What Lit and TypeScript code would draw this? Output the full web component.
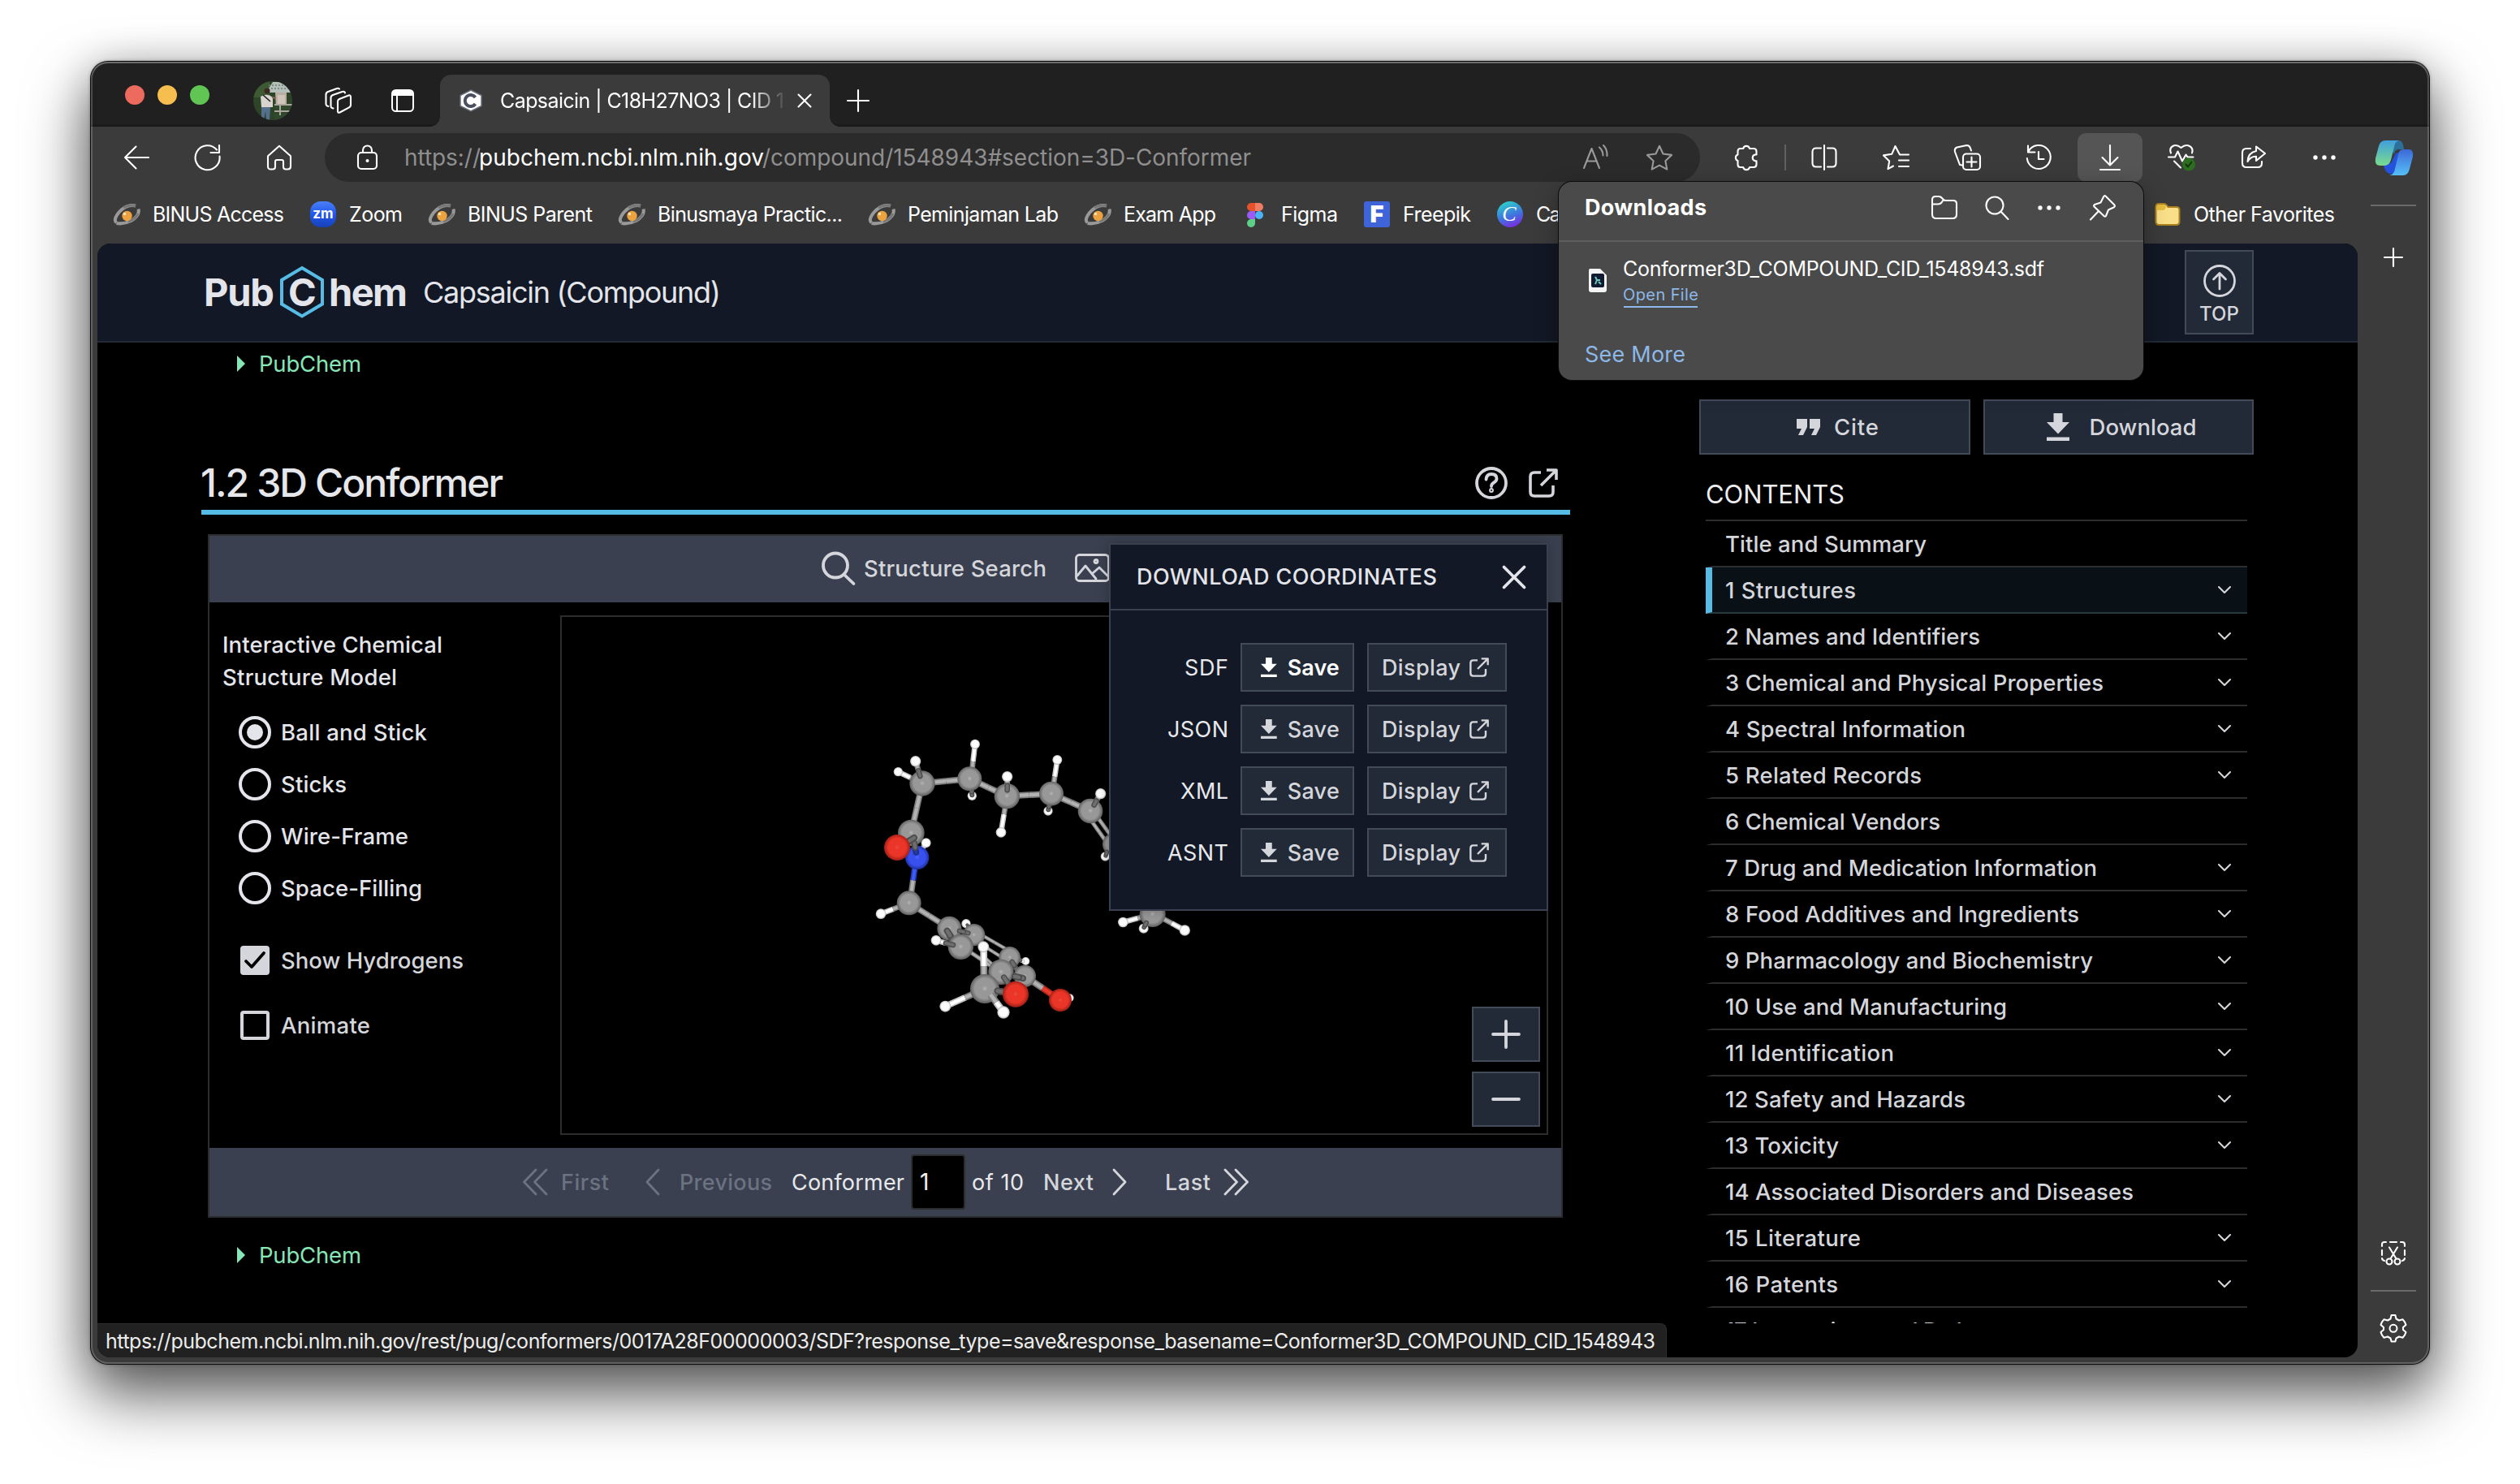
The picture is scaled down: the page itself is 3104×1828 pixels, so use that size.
import { LitElement, html, css, svg, nothing } from "lit";
import { customElement, property } from "lit/decorators.js";

/* Text set to a given measured width by spreading the difference over its letters. */
@customElement("fit-text")
class FitText extends LitElement {
  @property({ type: Number }) w = 0;
  @property() text = "";
  static styles = css`
    :host { display: inline-block; white-space: pre; flex: none; }
    .t { display: inline-block; margin-left: -1px; margin-right: -20px; }
  `;
  updated() {
    const el = this.renderRoot.querySelector(".t") as HTMLElement;
    el.style.letterSpacing = "0px";
    const natural = el.getBoundingClientRect().width;
    const n = Math.max(1, this.text.length - 1);
    if (this.w) {
      this.style.width = `${this.w}px`;
      el.style.letterSpacing = `${(this.w + 2 - natural) / n}px`;
    }
  }
  render() {
    return html`<span class="t">${this.text}</span>`;
  }
}

const fit = (text: string, w: number, cls = "") => html`<fit-text class=${cls} .w=${w} .text=${text}></fit-text>`;

/* Icons are drawn on a canvas of w x h pixels. */
const icon = (w: number, h: number, body: unknown, cls = "line") =>
  html`<svg class=${cls} width=${w} height=${h} viewBox="0 0 ${w} ${h}">${body}</svg>`;

const I = {
  back: () => icon(32, 32, svg`<path d="M31 16H2M15.500 2.500 2 16l13.500 13.500"/>`),
  reload: () => icon(32, 32, svg`<path d="M30.500 14.500A15 15 0 1 1 27 6.500M30 1v9h-10.500"/>`),
  home: () => icon(32, 32, svg`<path d="M2 14.200 16 1.800l14 12.400V27q0 3.500-3.500 3.500H24q-3 0-3-3V21q0-2-2-2h-6q-2 0-2 2v6.500q0 3-3 3H5.500Q2 30.500 2 27z"/>`),
  lock: () => icon(32, 32, svg`<rect x="5" y="10" width="23" height="20" rx="4"/><path d="M11 10V7a5.500 5.500 0 0 1 11 0v3"/><circle cx="16.500" cy="20" r="2" fill="currentColor" stroke="none"/>`),
  aloud: () => icon(32, 32, svg`<path d="M2 29 11.500 5 21 29M5.500 20.500h12M21 3.500q4.500 4 4.500 10M26 1q5 5 4.500 13"/>`),
  star: () => icon(34, 32, svg`<path d="m17 1.800 4.500 9.700 10.500 1.400-7.600 7.300 1.900 10.400-9.300-5-9.300 5 1.900-10.400L2 12.900l10.500-1.400z"/>`),
  puzzle: () => icon(32, 32, svg`<path d="M7.500 5h4.700a4 4 0 0 1 7.800 0h5q3.500 0 3.500 3.500v4h-1.500a3.900 3.900 0 0 0 0 7.700h1.500v4.300q0 3.500-3.500 3.500h-5a4 4 0 0 1-7.800 0H8.500q-3 0-3-3.500V20a4 4 0 0 1 0-7.500V8.500Q5.500 5 8.500 5z"/>`),
  split: () => icon(32, 32, svg`<path d="M12 4.500H6q-4.500 0-4.500 4.500v14q0 4.500 4.500 4.500h6M20 4.500h6q4.500 0 4.500 4.500v14q0 4.500-4.500 4.500h-6M16 1v30"/>`),
  favs: () => icon(34, 32, svg`<path d="M22 12.500 16.500 2l-4.300 9.800L2 13.400l7.200 7-1.700 9.800 6.500-3.700M22 12.500h11M21 19.500h12M21 27h12"/>`),
  collections: () => icon(34, 32, svg`<rect x="12" y="11.500" width="21" height="19.500" rx="4"/><path d="M22.500 15.500v12M16.500 21.500h12M11 25.500 8 25 2 9q-1-4 2.500-5.500l12-2.500q3.500 0 4.500 3.500l1 3"/>`),
  history: () => icon(32, 32, svg`<path d="M3.500 8.500A14.500 14.500 0 1 1 1.800 17M3 1.500v8h8.500M16 9v9h6.500"/>`),
  dl: () => icon(34, 32, svg`<path d="M17 1v24M7.500 16 17 25.500l9.500-9.500M5 31h24"/>`),
  heart: () => icon(34, 36, svg`<path d="M4 12.500C1 5 9-.500 16.500 6 24-.500 32.500 5 30 12.500M1 17.500h8l3.500-7 5.500 12 4.500-8 2 3h7M8 22.500l8 8"/><circle cx="26" cy="26.500" r="8" fill="#2b6e1f" stroke="none"/><path d="m22.500 26.500 2.500 3 4.500-6" stroke="#16300f" stroke-width="2"/>`),
  share: () => icon(34, 32, svg`<path d="M14 5H9Q4 5 4 10v13q0 5 5 5h14q5 0 5-5v-2"/><path d="M21 2.500 32 11 21 20v-5.200Q14 14.500 10.500 21 11 10 21 8z"/>`),
  dots: () => icon(32, 8, svg`<circle cx="5" cy="4" r="2.700"/><circle cx="16" cy="4" r="2.700"/><circle cx="27" cy="4" r="2.700"/>`, "solid"),
  plus: (s: number) => icon(s, s, svg`<path d="M${s / 2} 1v${s - 2}M1 ${s / 2}h${s - 2}"/>`),
  cross: (s: number, c = "line") => icon(s, s, svg`<path d="m1.500 1.500 ${s - 3} ${s - 3}m0-${s - 3}-${s - 3} ${s - 3}"/>`, c),
  folder: () => icon(34, 32, svg`<path d="M2 9V6q0-4 4-4h4q2.500 0 4 2l2 2q1 1 3 1h9q4 0 4 4v13q0 5-5 5H7q-5 0-5-5zM2 11.500h7q3 0 4.500-2l2-3"/>`),
  mag: () => icon(30, 32, svg`<circle cx="12" cy="13" r="10.500"/><path d="m19.500 20.500 9 9.500"/>`),
  pin: () => icon(34, 34, svg`<path d="M20.500 2.500 31.500 13.500q1 2-1 3l-6.500 3-3 7.500q-1 1.500-2.500 0L6.500 15.500q-1-1.500.5-2.500l7.500-2.500 3.500-7q1-2 2.500-1zM11.500 21.500 2 31.500"/>`),
  ext: (s: number) => icon(s, s, svg`<g transform="scale(${s / 36})"><path d="M15 5H7Q2 5 2 10v19q0 5 5 5h18q5 0 5-5V21M22 2h12v12M34 2 15 21"/></g>`, "line ext"),
  dlSolid: (s: number) => icon((s * 28) / 34, s, svg`<g transform="scale(${s / 34})"><path d="M8.500 0h11v11h8.500L14 25.500 0 11h8.500zM0 29.500h28V34H0z"/></g>`, "solid"),
  glass: () => icon(42, 42, svg`<circle cx="17" cy="17.500" r="15"/><path d="M28 29 39.500 40"/>`, "line heavy"),
  image: () => icon(46, 36, svg`<rect x="1.500" y="1.500" width="40" height="32" rx="4"/><path d="m3 27 10-12 13 16M22 24l8-7 11 11"/><circle cx="26" cy="9.500" r="2"/>`, "line mid"),
  snip: () => icon(32, 32, svg`<path d="M2 7V5q0-3 3-3h2M12 2h8M25 2h2q3 0 3 3v2M2 12v6M30 12v6M2 22q.5 2.500 3 3M30 22q-.5 2.500-3 3M11 8.500l8.500 14M21 8.500l-8.500 14"/><circle cx="11" cy="26" r="3.500"/><circle cx="21" cy="26" r="3.500"/>`),
  gear: () => icon(34, 36, svg`<path d="M13.500 6.500 14.600 2h4.800l1.100 4.500 3.500 2 4.500-1.300q3 3 4 6.800L29 17v3l3.500 3q-1 3.800-4 6.800L24 28.500l-3.500 2-1.100 4h-4.800l-1.100-4-3.500-2-4.500 1.300q-3-3-4-6.800L5 20v-3l-3.500-3q1-3.800 4-6.800L10 8.500z"/><circle cx="17" cy="18.300" r="4.500"/>`),
};

const binus = () => icon(32, 32, svg`<path d="M27 5.500Q16 3 6.500 13.500-1 23 3.500 26M30.500 9.500q2 8-9 14.500-9 4.500-18 3" stroke="#999" stroke-width="4" fill="none"/><path d="M27 5.500Q18 3.500 12 8M30 15q-3 7-12 10" stroke="#777" stroke-width="3" fill="none"/><circle cx="16.500" cy="18" r="6.200" fill="#eba23f"/><rect x="12" y="14" width="3" height="3" fill="#ffe2b8"/>`, "pic");
const zoomIcon = () => html`<span class="zm"><b>zm</b></span>`;
const figma = () => icon(32, 32, svg`<path d="M16 2h-5a5 5 0 0 0 0 10h5z" fill="#e5532d"/><path d="M16 2h5a5 5 0 0 1 0 10h-5z" fill="#ef7b62"/><path d="M16 12h-5a5 5 0 0 0 0 10h5z" fill="#9a5cf5"/><circle cx="21" cy="17" r="5" fill="#4bb3f5"/><path d="M16 22h-5a5 5 0 1 0 5 5z" fill="#5fce88"/>`, "pic");
const freepik = () => html`<span class="fp"><b>F</b></span>`;
const canva = () => html`<span class="cv"><i>C</i></span>`;

const bookmarks: [() => unknown, string, number][] = [
  [binus, "BINUS Access", 160], [zoomIcon, "Zoom", 64], [binus, "BINUS Parent", 152],
  [binus, "Binusmaya Practic...", 226], [binus, "Peminjaman Lab", 184], [binus, "Exam App", 112],
  [figma, "Figma", 68], [freepik, "Freepik", 82], [canva, "Canva", 66],
];

const toc: [string, number, boolean][] = [
  ["Title and Summary", 246, false], ["1 Structures", 159, true], ["2 Names and Identifiers", 312, true],
  ["3 Chemical and Physical Properties", 464, true], ["4 Spectral Information", 294, true],
  ["5 Related Records", 240, true], ["6 Chemical Vendors", 263, false],
  ["7 Drug and Medication Information", 456, true], ["8 Food Additives and Ingredients", 434, true],
  ["9 Pharmacology and Biochemistry", 451, true], ["10 Use and Manufacturing", 345, true],
  ["11 Identification", 206, true], ["12 Safety and Hazards", 294, true], ["13 Toxicity", 138, true],
  ["14 Associated Disorders and Diseases", 501, false], ["15 Literature", 165, true],
  ["16 Patents", 137, true], ["17 Interactions and Pathways", 366, true],
];

/* ---- molecule ---- */
type Shape = ["a", string, number, number, number] | ["b", string, string, number, number, number, number, number];
const A = (k: string, x: number, y: number, r: number): Shape => ["a", k, x, y, r];
const B = (k1: string, k2: string, x1: number, y1: number, x2: number, y2: number, w = 20): Shape => ["b", k1, k2, x1, y1, x2, y2, w];
const tone: Record<string, [string, string]> = {
  C: ["#7c7c7c", "#b2b2b2"], D: ["#4d4d4d", "#6e6e6e"], H: ["#c4c4c4", "#ffffff"],
  O: ["#b3261c", "#ea3a2b"], R: ["#7c1a13", "#a5261d"], N: ["#2438b8", "#3f5bf5"], M: ["#1f2d80", "#29389c"],
};
const molecule: Shape[] = [
  B("C", "H", 258, 255, 169, 212), A("H", 169, 212, 17),
  B("C", "C", 258, 255, 433, 238, 23), B("C", "C", 433, 238, 571, 302, 23), B("C", "C", 571, 302, 735, 293, 23),
  B("C", "C", 735, 293, 879, 357, 23), B("C", "C", 258, 255, 217, 438, 23),
  B("C", "H", 438, 238, 453, 110), A("H", 453, 110, 18), B("C", "H", 571, 302, 549, 436), A("H", 549, 436, 19),
  B("C", "H", 738, 293, 757, 168), A("H", 757, 168, 18),
  A("H", 442, 301, 17), B("D", "D", 440, 275, 442, 298, 18), A("H", 723, 357, 17), B("D", "D", 728, 330, 724, 352, 18),
  B("C", "C", 895, 365, 985, 490, 15), B("C", "C", 870, 375, 955, 495, 15),
  A("C", 965, 480, 41), A("H", 934, 525, 17), B("D", "D", 940, 508, 936, 522, 16),
  A("C", 258, 255, 47), A("C", 433, 238, 45), A("C", 571, 302, 47), A("C", 735, 293, 45), A("C", 879, 357, 46),
  B("D", "C", 250, 228, 238, 188), A("H", 233, 173, 20), B("D", "C", 572, 280, 572, 245), A("H", 572, 230, 20),
  B("D", "C", 893, 335, 910, 304), A("H", 917, 293, 20),
  B("H", "C", 271, 476, 250, 510, 18), A("H", 272, 475, 18), A("C", 217, 438, 49),
  B("N", "C", 236, 529, 212, 697, 22), A("N", 239, 529, 44), B("D", "M", 229, 475, 235, 510, 22), B("D", "R", 228, 456, 190, 480, 24),
  A("O", 165, 492, 48),
  B("C", "H", 195, 702, 105, 737), A("H", 105, 737, 19), B("C", "C", 209, 697, 358, 791, 22), A("C", 209, 697, 45),
  B("C", "C", 460, 805, 590, 880, 13), B("C", "C", 460, 840, 580, 915, 13), B("C", "C", 400, 855, 550, 955, 15), B("C", "C", 480, 890, 530, 935, 12),
  A("H", 420, 773, 17), B("D", "D", 432, 787, 424, 778, 12), A("C", 358, 791, 45), A("C", 449, 815, 41),
  B("D", "D", 395, 800, 428, 808, 18), B("D", "D", 350, 800, 372, 835, 24), A("C", 400, 859, 47),
  B("D", "H", 372, 852, 318, 838), A("H", 309, 835, 19),
  A("H", 640, 912, 15), B("D", "H", 612, 906, 630, 912, 14), A("C", 581, 898, 40), B("D", "D", 590, 915, 605, 940, 20),
  B("C", "O", 637, 967, 768, 1056, 24), A("C", 637, 967, 41), A("C", 549, 952, 47), B("D", "D", 600, 968, 630, 975, 24),
  B("D", "R", 560, 972, 585, 1008, 22), B("C", "H", 486, 990, 485, 870, 26), A("H", 484, 859, 21),
  B("C", "H", 489, 1014, 343, 1079, 24), A("H", 343, 1079, 21),
  A("C", 489, 1014, 54), B("D", "R", 536, 1022, 578, 1028, 26), A("O", 603, 1034, 48),
  B("C", "H", 510, 1035, 552, 1092, 26), A("H", 558, 1101, 23), A("H", 803, 1048, 15), A("O", 768, 1056, 42),
  B("C", "H", 1109, 738, 1000, 768), A("H", 1000, 768, 19), B("C", "H", 1130, 745, 1228, 798), A("H", 1228, 798, 20),
  A("H", 1076, 791, 18), A("C", 1109, 738, 48), B("D", "D", 1086, 770, 1078, 786, 18),
];
const drawShape = (s: Shape) => {
  if (s[0] === "a") return svg`<circle cx=${s[2]} cy=${s[3]} r=${s[4]} fill="url(#g${s[1]})"/>`;
  const [, k1, k2, x1, y1, x2, y2, w] = s;
  const mx = (x1 + x2) / 2, my = (y1 + y2) / 2;
  const half = (k: string, a: number, b: number, c: number, d: number) => svg`
    <path d="M${a} ${b}L${c} ${d}" stroke=${tone[k][0]} stroke-width=${w} fill="none"/>
    <path d="M${a} ${b}L${c} ${d}" stroke=${tone[k][1]} stroke-width=${w * 0.55} fill="none"/>`;
  return svg`<g stroke-linecap=${k1 === "D" ? "round" : "butt"}>${half(k2, mx, my, x2, y2)}${half(k1, x1, y1, mx, my)}</g>`;
};
const grad = (id: string, a: string, b: string, c: string) => svg`
  <radialGradient id=${id} cx="50%" cy="49%" r="51%"><stop offset="0" stop-color=${a}/><stop offset=".2" stop-color=${b}/><stop offset=".68" stop-color=${b}/><stop offset="1" stop-color=${c}/></radialGradient>`;

const sourceLink = (s: string) => html`<span class="tri"></span>${fit(s, 124)}`;

@customElement("app-root")
class AppRoot extends LitElement {
  static styles = css`
    :host { display: block; width: 3104px; height: 1828px; box-sizing: border-box; padding: 76px 112px; background: #fff; overflow: hidden; font-family: Inter, "Liberation Sans", sans-serif; font-optical-sizing: none; font-size: 26px; color: #fff; }
    * { box-sizing: border-box; }
    svg { flex: none; display: block; overflow: visible; }
    .line { fill: none; stroke: currentColor; stroke-width: 2.1; stroke-linecap: round; stroke-linejoin: round; }
    .ext { stroke-width: 3.600; stroke-linecap: butt; }
    .heavy { stroke-width: 3.800; }
    .mid { stroke-width: 2.800; }
    .solid { fill: currentColor; }
    .window { position: relative; width: 2880px; height: 1604px; border-radius: 21px; background: #3b3b3b; box-shadow: 0 0 0 1px #0a0a0a, 0 0 4px rgba(0,0,0,.5), 0 36px 76px 4px rgba(0,0,0,.62), 0 4px 50px rgba(0,0,0,.2); display: flex; flex-direction: column; }
    .edge { position: absolute; inset: 0; border-radius: 21px; box-shadow: inset 0 0 0 2px rgba(255,255,255,.2), inset 0 2px 0 rgba(255,255,255,.18); pointer-events: none; }

    .tabs { height: 80px; background: #202020; border-radius: 20px 20px 0 0; display: flex; align-items: flex-start; padding-left: 42px; box-shadow: inset 0 -3px 3px -2px #111; }
    .light { width: 24px; height: 24px; border-radius: 50%; margin: 29px 16px 0 0; }
    .red { background: #ed6a5e; } .yellow { background: #f5be4f; } .green { background: #61c554; }
    .avatar { margin: 24px 0 0 38px; }
    .spaces { margin: 32px 0 0 40px; }
    .vtabs { margin: 34px 0 0 49px; }
    .tab { position: relative; margin: 16px 0 0 32px; width: 480px; height: 64px; border-radius: 14px 14px 0 0; background: #3b3b3b; display: flex; align-items: center; padding: 0 22px 0 23px; font-size: 25px; }
    .tab::before, .tab::after { content: ""; position: absolute; bottom: 0; width: 12px; height: 12px; }
    .tab::before { left: -12px; background: radial-gradient(circle at 0 0, transparent 11.500px, #3b3b3b 12px); }
    .tab::after { right: -12px; background: radial-gradient(circle at 100% 0, transparent 11.500px, #3b3b3b 12px); }
    .tabtitle { margin-left: 22px; width: 350px; -webkit-mask-image: linear-gradient(90deg, #000 88%, rgba(0,0,0,.15) 99%); }
    .tabx { margin-left: 16px; }
    .newtab { margin: 34px 0 0 21px; }

    .toolbar { height: 76px; flex: none; display: flex; align-items: center; padding-left: 12px; }
    .cell { width: 88px; height: 60px; flex: none; display: flex; align-items: center; justify-content: center; }
    .active { width: 80px; margin: 0 4px; background: #555; border-radius: 10px; }
    .address { width: 1694px; height: 60px; margin: 0 13px 0 12px; border-radius: 30px; background: #2b2b2b; display: flex; align-items: center; padding: 0 33px 0 36px; font-size: 28px; color: #fff; }
    .url { margin-left: 31px; display: flex; }
    .dim { color: #8f8f8f; }
    .addricons { margin-left: auto; display: flex; gap: 46px; color: #9a9a9a; }
    .vsep { width: 2px; height: 32px; margin: 0 3px; background: #616161; }
    .copilot { width: 84px; }

    .below { display: flex; height: 1448px; }
    .left { width: 2792px; display: flex; flex-direction: column; }
    .bookmarks { height: 68px; display: flex; align-items: center; gap: 33px; padding: 0 29px 4px 28px; font-size: 25px; }
    .bm { display: flex; align-items: center; gap: 17px; }
    .other { margin-left: auto; }
    .zm { width: 32px; height: 32px; border-radius: 13px; background: linear-gradient(#4a80f7, #2257ee 50%, #1741b4); display: flex; justify-content: center; align-items: center; font-size: 17px; line-height: 20px; padding-bottom: 3px; }
    .fp { width: 32px; height: 32px; border-radius: 3px; background: #3f63d8; display: flex; justify-content: center; align-items: center; font-size: 29px; line-height: 32px; }
    .fp b { font-weight: 900; }
    .cv { width: 32px; height: 32px; border-radius: 50%; background: linear-gradient(160deg, #2fc3cd 15%, #3f74dd 55%, #7a2be2 90%); display: flex; justify-content: center; align-items: center; font: italic 26px/32px "Liberation Serif", serif; padding-right: 2px; }

    .side { width: 88px; display: flex; flex-direction: column; align-items: center; padding: 20px 0 26px 0; }
    .rule { width: 56px; height: 2px; background: #6a6a6a; flex: none; }
    .side .p { margin-top: 51px; }
    .side .snip { margin-top: auto; }
    .side .r2 { margin: 29px 0 27px; }

    .page { position: relative; margin-left: 8px; width: 2784px; height: 1372px; background: #000; border-radius: 16px; overflow: hidden; display: flex; flex-direction: column; }
    .head { height: 122px; flex: none; background: #121825; border-bottom: 2px solid #222a37; display: flex; align-items: center; padding: 0 128px 0 132px; color: #e4e5ea; }
    .brand { display: flex; align-items: center; font-weight: 700; font-size: 47px; line-height: 60px; height: 118px; }
    .hex { position: relative; width: 54px; height: 64px; margin: 0 7px 0 8px; display: flex; align-items: center; justify-content: center; }
    .hex svg { position: absolute; inset: 0; }
    .ctitle { margin-left: 21px; font-size: 36px; }
    .top { margin-left: auto; width: 85px; height: 104px; border: 2px solid #434b59; background: #222937; display: flex; flex-direction: column; align-items: center; padding-top: 15px; color: #d4d6db; font-weight: 500; font-size: 24px; }
    .top fit-text { margin-top: 6px; line-height: 28px; }

    .cols { display: flex; padding-left: 128px; }
    .main { width: 1686px; font-size: 27.500px; }
    .src { height: 50px; display: flex; align-items: center; padding: 1px 0 0 44px; color: #87e6b7; }
    .src2 { margin-top: 20px; }
    .tri { border-left: 10px solid #87e6b7; border-top: 10px solid transparent; border-bottom: 10px solid transparent; margin-right: 18px; }
    .h2 { margin-top: 90px; height: 72px; border-bottom: 6px solid #56bbe5; display: flex; align-items: center; padding-bottom: 1px; font-size: 48px; font-weight: 500; font-optical-sizing: auto; color: #e6e7eb; }
    .help { margin-left: auto; color: #d4d6db; }
    .h2 .open { margin: 0 15px 0 26px; color: #d4d6db; }
    .card { position: relative; margin: 24px 0 0 8px; width: 1669px; height: 842px; border: 2px solid #2c2d2f; }
    .bar { height: 82px; background: #3a404f; display: flex; align-items: center; padding: 0 0 2px 754px; color: #d4d6db; font-weight: 500; }
    .bar fit-text { margin: 0 36px 0 11px; }
    .body { height: 672px; display: flex; padding: 16px; padding-left: 0; color: #e4e5ea; font-weight: 500; }
    .opts { width: 432px; padding: 16px 0 0 17px; line-height: 40px; }
    .opts > fit-text { display: block; }
    .radios, .checks { padding-left: 20px; margin-top: 16px; }
    .radio { height: 64px; display: flex; align-items: center; gap: 13px; }
    .ring { width: 40px; height: 40px; border-radius: 50%; border: 4px solid #e4e5ea; display: flex; align-items: center; justify-content: center; margin-left: -1px; }
    .ring i { width: 20px; height: 20px; border-radius: 50%; background: #e4e5ea; }
    .check { height: 80px; display: flex; align-items: center; gap: 15px; color: #d4d6db; padding: 1px 0 0 1px; }
    .box { width: 36px; height: 36px; border: 4px solid #d4d6db; border-radius: 4px; }
    .on { background: #d4d6db; color: #000; }
    .viewer { position: relative; width: 1217px; height: 640px; border: 2px solid #2c2d2f; }
    .zooms { position: absolute; right: 8px; bottom: 8px; display: flex; flex-direction: column; gap: 12px; }
    .zb { width: 84px; height: 68px; background: #222937; border: 2px solid #434b59; display: flex; align-items: center; justify-content: center; color: #d4d6db; }
    .pager { height: 84px; background: #3a404f; display: grid; grid-template-columns: 48px 103px 43px 138px 146px 76px 88px 84px 66px 72px 30px; align-items: center; padding-left: 386px; color: #d4d6db; font-weight: 500; font-size: 27px; }
    .off { color: #6b7280; }
    .lit { color: #e8e9ec; font-weight: 400; }
    .num { width: 67px; height: 68px; background: #000; border: 2px solid #2c2d2f; border-radius: 4px; padding: 0 0 0 9px; line-height: 64px; font-size: 28px; color: #f2f2f2; font-weight: 400; }
    .modal { position: absolute; left: 1108px; top: 9px; width: 541px; height: 453px; background: #121825; border: 2px solid #3a404f; box-shadow: 0 0 14px rgba(0,0,0,.25); }
    .mhead { height: 81px; border-bottom: 2px solid #3a404f; display: flex; align-items: center; justify-content: space-between; padding: 0 26px 0 33px; color: #e4e5ea; font-weight: 500; font-size: 27px; }
    .mbody { padding: 40px 49px 0 0; display: flex; flex-direction: column; gap: 16px; }
    .mrow { height: 60px; display: flex; justify-content: flex-end; align-items: center; gap: 16px; font-size: 27px; color: #e8e9ec; }
    .btn { height: 60px; border: 2px solid #434b59; background: #222937; display: flex; align-items: center; color: #d4d6db; font-weight: 500; }
    .save { width: 140px; padding-left: 23px; gap: 14px; }
    .display { width: 172px; padding-left: 17px; gap: 12px; }
    .hot { color: #fff; font-weight: 600; }

    .aside { margin-left: 159px; width: 683px; padding-top: 70px; font-size: 27.500px; font-weight: 500; color: #d4d6db; }
    .acts { display: grid; grid-template-columns: 334px 333px; gap: 16px; }
    .act { height: 68px; justify-content: center; padding-left: 6px; }
    .cite { gap: 18px; } .down { gap: 26px; }
    .ch { height: 80px; padding: 16px 0 0 9px; display: flex; align-items: center; font-size: 31px; font-weight: 400; color: #ededf0; }
    .toc { margin-left: 8px; width: 667px; height: 990px; overflow: hidden; border-top: 2px solid #2c2d2f; font-size: 27.500px; }
    .row { height: 57px; border-bottom: 2px solid #2c2d2f; border-left: 8px solid transparent; padding: 0 20px 0 17px; display: flex; align-items: center; justify-content: space-between; }
    .cur { border-left-color: #56bbe5; background: #091117; border-bottom-color: #29383e; }

    .status { position: absolute; left: 0; bottom: 0; width: 1933px; height: 42px; background: #212121; border: 1px solid #2d2d2d; border-left: 0; border-bottom: 0; border-top-right-radius: 8px; padding-left: 11px; display: flex; align-items: center; font-size: 25px; color: #ececec; }

    .pop { position: absolute; left: 1808px; top: 148px; width: 720px; height: 244px; border-radius: 16px; background: #4a4a4a; box-shadow: 0 0 0 1px #0c0c0c, 0 8px 28px rgba(0,0,0,.35); }
    .phead { height: 74px; border-bottom: 2px solid #5e5e5e; display: flex; align-items: center; padding: 0 33px 9px 33px; font-weight: 700; font-size: 27px; }
    .picons { margin-left: auto; display: flex; align-items: center; gap: 33px; }
    .file { display: flex; padding: 18px 0 0 36px; }
    .file svg { margin-top: 15px; }
    .ftext { margin-left: 20px; display: flex; flex-direction: column; line-height: 30px; font-size: 25px; }
    .ofile { font-size: 20px; line-height: 26px; color: #8db8e8; margin-top: 4px; height: 29px; border-bottom: 2px solid #8db8e8; width: 91px; }
    .more { color: #8db8e8; padding: 41px 0 0 33px; font-size: 27px; }
  `;

  private tabs() {
    return html`<div class="tabs">
      <span class="light red"></span><span class="light yellow"></span><span class="light green"></span>
      <svg class="avatar" width="48" height="48" viewBox="0 0 48 48">
        <defs><clipPath id="av"><circle cx="24" cy="24" r="24"/></clipPath></defs>
        <g clip-path="url(#av)">
          <rect width="48" height="48" fill="#2e4429"/><path d="M0 0h20v20H0z" fill="#3d5a34"/>
          <path d="M17 12 24 1h18l5 13H17z" fill="#b5bfb9"/><path d="M19 5h26M18 9h28" stroke="#6f7d77" stroke-width="1.500" stroke-dasharray="2 2"/>
          <path d="M27 14h14v20H28z" fill="#b9ada3"/><path d="M30 17h9v13h-9z" fill="#cfc4ba"/>
          <path d="M26 28h22v2H26zM26 36h22v2H26z" fill="#a9a79c"/><path d="M26 30h22v5H26zM26 40h22v8H26z" fill="#30482b"/><path d="M32 28h2v14h-2z" fill="#a9a79c"/>
          <circle cx="17" cy="12" r="3.500" fill="#3b2a22"/><path d="M9 19q8-5 15 1v12H10z" fill="#d8d5cf"/><path d="M23 20l5 1" stroke="#8a6a58" stroke-width="2"/><path d="M12 17l9 8" stroke="#222" stroke-width="1.600"/>
          <path d="M10 32h11l-1 16h-4l-1-11-2 11h-3z" fill="#54708c"/>
        </g>
      </svg>
      <svg class="line spaces" width="33" height="32" viewBox="0 0 33 32"><path d="m18 14 11.500-4.500q2.500-.5 2.500 2v10q0 2-2 2.800L18.500 30.500q-2.500 1-2.500-1.500V17q0-2.200 2-3zM10.500 25.500 9 25q-1.500-.5-1.500-2.500v-10q0-2.500 2.500-3.500L21.500 5q3-.8 3.500 1.500M4.500 23l-1.500-.5q-1.500-.5-1.500-2.500V8.500Q1.500 6 4 5L15 1q2-.5 3 .5"/></svg>
      <svg class="vtabs" width="28" height="28" viewBox="0 0 28 28"><rect x="1" y="1" width="26" height="26" rx="4.500" fill="none" stroke="#fff" stroke-width="2"/><path d="M1 8V5q0-4 4-4h18q4 0 4 4v3zM6 8h2v19H6z" fill="#fff"/></svg>
      <div class="tab">
        <svg width="30" height="28" viewBox="0 0 30 28"><path d="m15 1 13 6.500v13L15 27 2 20.500v-13z" fill="#fff" stroke="#676d7b" stroke-width="1.500"/><path d="M20.500 10A7 7 0 1 0 20.500 18" fill="none" stroke="#4b5060" stroke-width="4"/></svg>
        <div class="tabtitle">${fit("Capsaicin | C18H27NO3 | CID 1", 348)}</div>
        <svg class="line tabx" width="18" height="18" viewBox="0 0 18 18"><path d="m1.500 1.500 15 15m0-15-15 15"/></svg>
      </div>
      <span class="newtab">${I.plus(28)}</span>
    </div>`;
  }

  private toolbar() {
    const c = (x: unknown, cls = "") => html`<span class="cell ${cls}">${x}</span>`;
    return html`<div class="toolbar">
      ${c(I.back())}${c(I.reload())}${c(I.home())}
      <div class="address">${I.lock()}
        <div class="url">${fit("https://", 92, "dim")}${fit("pubchem.ncbi.nlm.nih.gov", 349)}${fit("/compound/1548943#section=3D-Conformer", 600, "dim")}</div>
        <div class="addricons">${I.aloud()}${I.star()}</div>
      </div>
      ${c(I.puzzle())}<span class="vsep"></span>${c(I.split())}${c(I.favs())}${c(I.collections())}${c(I.history())}${c(I.dl(), "active")}${c(I.heart())}${c(I.share())}${c(I.dots())}
      <span class="cell copilot"><svg width="48" height="44" viewBox="0 0 48 44">
        <defs>
          <linearGradient id="c1" x1="0" y1="0" x2="0" y2="1"><stop offset="0" stop-color="#3f9fdc"/><stop offset="1" stop-color="#7bdc8e"/></linearGradient>
          <linearGradient id="c2" x1="0" y1="0" x2="0" y2="1"><stop offset="0" stop-color="#3d68d8"/><stop offset="1" stop-color="#56c0f7"/></linearGradient>
        </defs>
        <path d="M11 31q5-3 9-2l6-12 6-2 2 10-10 17h-5q-6 0-8-11z" fill="#2452dc"/><path d="M22 1h8q5 0 6 11h-7q-4 0-5 6l-4-6z" fill="#2b6f9b"/>
        <path d="M13 1h17q-5 1-6 8l-4 16q-2 7-8 7H7Q-.5 32 1 23L5 8q2-7 8-7z" fill="url(#c1)"/>
        <path d="M35 12h7q6 0 5 9l-4 15q-2 8-8 8H18q6-1 7-8l4-17q1-7 6-7z" fill="url(#c2)"/></svg></span>
    </div>`;
  }

  private molecule() {
    return html`<svg width="1213" height="636" viewBox="-1074 -360 3639 1908">
      <defs>${grad("gC", "#b5b5b5", "#989898", "#5c5c5c")}${grad("gH", "#ffffff", "#fbfbfb", "#a8a8a8")}${grad("gO", "#ee4c3f", "#ea3528", "#9c1e15")}${grad("gN", "#4f68ff", "#3850ee", "#1e2f9c")}</defs>
      ${molecule.map(drawShape)}
    </svg>`;
  }

  private page() {
    const chevs = (d: string, w: number) => icon(w, 34, svg`<path d=${d}/>`, "line mid");
    return html`<div class="page">
      <div class="head">
        <div class="brand">${fit("Pub", 85)}<span class="hex"><svg width="54" height="64" viewBox="0 0 54 64"><path d="m27 2 25 15v29.500L27 61.500 2 46.500V17z" fill="none" stroke="#56bbe5" stroke-width="4"/></svg>${fit("C", 32)}</span>${fit("hem", 95)}</div>
        <div class="ctitle">${fit("Capsaicin (Compound)", 365)}</div>
        <div class="top">${icon(42, 42, svg`<circle cx="21" cy="21" r="18.500"/><path d="M21 31V12M13.500 19 21 11.500l7.500 7.500"/>`, "line mid")}${fit("TOP", 47)}</div>
      </div>
      <div class="cols">
        <div class="main">
          <div class="src">${sourceLink("PubChem")}</div>
          <div class="h2">${fit("1.2 3D Conformer", 371)}
            <span class="help">${icon(40, 40, svg`<circle cx="20" cy="20" r="18"/><path d="M13.500 15.500q.5-6.500 6.500-6.500 6.500 0 6.500 5.500 0 3-3.500 5-3 1.700-3 4.500"/><circle cx="20" cy="29" r="1" />`, "line heavy")}</span>
            <span class="open">${I.ext(36)}</span>
          </div>
          <div class="card">
            <div class="bar">${I.glass()}${fit("Structure Search", 223)}${I.image()}</div>
            <div class="body">
              <div class="opts">
                ${fit("Interactive Chemical", 269)}${fit("Structure Model", 213)}
                <div class="radios">
                  ${([["Ball and Stick", 178], ["Sticks", 79], ["Wire-Frame", 155], ["Space-Filling", 172]] as [string, number][]).map(
                    ([t, w], i) => html`<div class="radio"><span class="ring">${i === 0 ? html`<i></i>` : nothing}</span>${fit(t, w)}</div>`)}
                </div>
                <div class="checks">
                  <div class="check"><span class="box on">${icon(28, 28, svg`<path d="m3 15 7 7L25 5"/>`, "line heavy")}</span>${fit("Show Hydrogens", 223)}</div>
                  <div class="check"><span class="box"></span>${fit("Animate", 108)}</div>
                </div>
              </div>
              <div class="viewer">${this.molecule()}
                <div class="zooms">
                  <div class="zb">${icon(36, 36, svg`<path d="M18 2v32M2 18h32"/>`, "line heavy")}</div>
                  <div class="zb">${icon(36, 36, svg`<path d="M2 18h32"/>`, "line heavy")}</div>
                </div>
              </div>
            </div>
            <div class="pager">
              <span class="off">${chevs("M16 2 1.500 17 16 32M29 2 14.500 17 29 32", 30)}</span>${fit("First", 57, "off")}
              <span class="off">${chevs("M16 2 2 17l14 15", 18)}</span>${fit("Previous", 112, "off")}
              ${fit("Conformer", 137, "lit")}<span class="num">1</span>${fit("of 10", 62, "lit")}
              ${fit("Next", 60)}${chevs("M2 2l14 15L2 32", 18)}${fit("Last", 54)}${chevs("M1 2l14.500 15L1 32M14 2l14.500 15L14 32", 30)}
            </div>
            <div class="modal">
              <div class="mhead">${fit("DOWNLOAD COORDINATES", 368)}${I.cross(28, "line heavy")}</div>
              <div class="mbody">
                ${([["SDF", 52], ["JSON", 73], ["XML", 57], ["ASNT", 73]] as [string, number][]).map(([t, w], i) => html`
                  <div class="mrow">${fit(t, w)}
                    <div class="btn save ${i === 0 ? "hot" : ""}">${I.dlSolid(24)}${fit("Save", 62)}</div>
                    <div class="btn display">${fit("Display", 95)}${I.ext(24)}</div>
                  </div>`)}
              </div>
            </div>
          </div>
          <div class="src src2">${sourceLink("PubChem")}</div>
        </div>
        <div class="aside">
          <div class="acts">
            <div class="btn act cite">${icon(29, 20, svg`<path d="M0 0h13v10L8 20H2l4-8H0zM16 0h13v10l-5 10h-6l4-8h-6z"/>`, "solid")}${fit("Cite", 53)}</div>
            <div class="btn act down">${I.dlSolid(34)}${fit("Download", 130)}</div>
          </div>
          <div class="ch">${fit("CONTENTS", 169)}</div>
          <div class="toc">
            ${toc.map(([t, w, more], i) => html`<div class="row ${i === 1 ? "cur" : ""}">${fit(t, w)}${more ? icon(16, 10, svg`<path d="m1 1 7 7 7-7"/>`) : nothing}</div>`)}
          </div>
        </div>
      </div>
      <div class="status">${fit("https://pubchem.ncbi.nlm.nih.gov/rest/pug/conformers/0017A28F00000003/SDF?response_type=save&response_basename=Conformer3D_COMPOUND_CID_1548943", 1907)}</div>
    </div>`;
  }

  render() {
    return html`<div class="window">
      ${this.tabs()}${this.toolbar()}
      <div class="below">
        <div class="left">
          <div class="bookmarks">
            ${bookmarks.map(([ic, t, w]) => html`<span class="bm">${ic()}${fit(t, w)}</span>`)}
            <span class="bm other"><svg width="32" height="28" viewBox="0 0 32 28"><path d="M1.500 5q0-4 4-4h5q3 0 4.500 2l1.500 2H27q3.500 0 3.500 3.500V23q0 4-4 4h-21q-4 0-4-4z" fill="#fadf89" stroke="#a9821f" stroke-width="2"/><path d="M2.500 5q0-3 3-3h4q3 0 4.500 3-1 4-4.500 4h-7z" fill="#e3bb3d"/></svg>${fit("Other Favorites", 172)}</span>
          </div>
          ${this.page()}
        </div>
        <div class="side"><span class="rule"></span><span class="p">${I.plus(24)}</span><span class="snip">${I.snip()}</span><span class="rule r2"></span>${I.gear()}</div>
      </div>
      <div class="pop">
        <div class="phead">${fit("Downloads", 148)}<span class="picons">${I.folder()}${I.mag()}${I.dots()}${I.pin()}</span></div>
        <div class="file">
          <svg width="24" height="30" viewBox="0 0 24 30"><path d="M2 0h13l8 8v18q0 3-3 3H4q-3 0-3-3V3q0-3 1-3z" fill="#f4f4f4"/><rect x="4" y="6" width="16" height="17" rx="2" fill="#101a30"/><path d="M9 10l2 4 4 0M11 14l-2 5M13 16l3 3" stroke="#6fc7c0" stroke-width="2" fill="none"/></svg>
          <div class="ftext">${fit("Conformer3D_COMPOUND_CID_1548943.sdf", 517)}<div class="ofile">${fit("Open File", 91)}</div></div>
        </div>
        <div class="more">${fit("See More", 122)}</div>
      </div>
      <div class="edge"></div>
    </div>`;
  }
}
